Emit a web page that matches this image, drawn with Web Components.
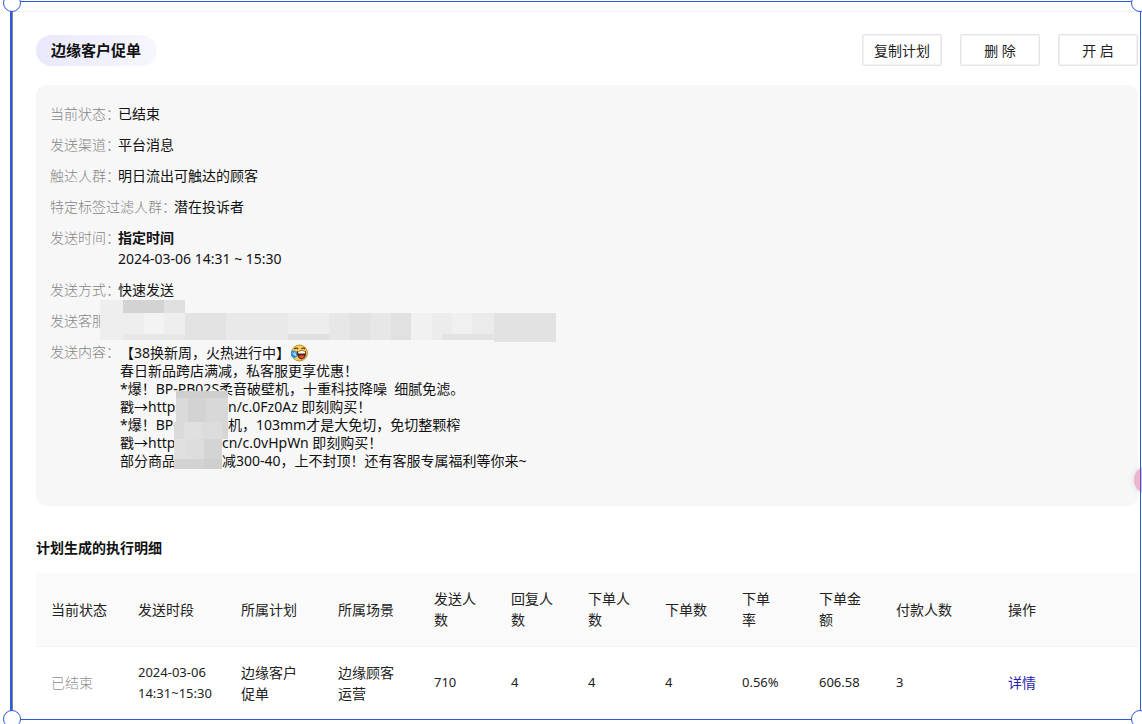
<!DOCTYPE html>
<html lang="zh-CN">
<head>
<meta charset="utf-8">
<title>边缘客户促单</title>
<style>
html,body{margin:0;background:#fff}
body{font-family:"Noto Sans","Noto Sans CJK SC",sans-serif;font-size:14px;line-height:21px;color:#1a1a1a}
</style>
</head>
<body>
<plan-page></plan-page>
<script>
const define=(name,html,setup)=>customElements.define(name,class extends HTMLElement{
  constructor(){super();this.attachShadow({mode:'open'}).innerHTML=html;}
  connectedCallback(){if(setup)setup(this,this.shadowRoot);}
});

define('plan-button',`<style>
:host{display:block}
button{width:80px;height:32px;padding:0;border:1px solid #e4e4e4;border-radius:2px;box-shadow:inset 0 0 0 1px #f3f3f3;background:#fff;font:inherit;color:#222;cursor:pointer}
</style><button type="button"><slot></slot></button>`);

define('plan-title',`<style>
:host{display:block}
h1{margin:0;padding:0 16px 0 15px;border-radius:16px;background:linear-gradient(100deg,#e8e8fb,#f7f7fe);font-size:15px;line-height:31px;font-weight:700;color:#111}
</style><h1><slot></slot></h1>`);

define('info-row',`<style>
:host{display:flex}
.label{color:#858585;font-weight:300;white-space:nowrap;margin-right:-2px}
.value{color:#111;min-width:0}
</style><span class="label"><slot name="label"></slot></span><div class="value"><slot></slot></div>`);

/* Grey pixel blocks laid over private details; each cell is "x,y,w,h,shade" */
define('pixel-mask',`<style>
:host{position:absolute;display:block;pointer-events:none}
svg{display:block}
</style><svg shape-rendering="crispEdges" aria-hidden="true"></svg>`,(el,root)=>{
  const svg=root.querySelector('svg');
  svg.setAttribute('width',el.getAttribute('w'));
  svg.setAttribute('height',el.getAttribute('h'));
  svg.innerHTML=el.getAttribute('cells').trim().split(/\s+/).map(c=>{
    const [x,y,w,h,f]=c.split(',');
    return `<rect x="${x}" y="${y}" width="${w}" height="${h}" fill="#${f}"/>`;}).join('');
});

define('laugh-emoji',`<style>
:host{display:block}
svg{display:block}
</style><svg width="18" height="18" viewBox="0 0 18 17" role="img" aria-label="笑哭">
<ellipse cx="9.500" cy="8.500" rx="8" ry="8" fill="#f9cf5a" stroke="#b07c22" stroke-width=".8"/>
<path d="M4.500 4.500Q6.500 2.500 8 4.500M11.500 4.500Q13 2.500 15 4.500" fill="none" stroke="#3d2508" stroke-width="1.200"/>
<path d="M6.500 7Q11 5.500 16 6.500Q17 13.500 11.500 15Q7 14 6.500 7Z" fill="#5a2410"/><path d="M8 7Q12 6 15.400 7L15 9H8.300Z" fill="#fff"/><path d="M8.500 12Q12 9.500 14.800 12Q12 15.500 8.500 12Z" fill="#e0503c"/>
<path d="M1 7Q4 4.500 7 8Q8 13 4.500 13.500Q0 13 1 7Z" fill="#2d8fe0"/><path d="M2.500 8.500L5 10.500M4.500 7.500L6 11.500" stroke="#c8eaff"/>
</svg>`);

define('message-body',`<style>
:host{display:block;position:relative;line-height:18px;white-space:nowrap;color:#111}
p{margin:0;display:flex;white-space:pre}
.head{flex:none;overflow:hidden}
.link{width:108px}.site{width:102px}
.mask{left:54px;top:47px}
</style>
<p>【38换新周，火热进行中】<laugh-emoji></laugh-emoji></p>
<p>春日新品跨店满减，私客服更享优惠！</p>
<p>*爆！BP-PB02S柔音破壁机，十重科技降噪  细腻免滤。</p>
<p><span class="head link">戳→https</span><span>n/c.0Fz0Az 即刻购买！</span></p>
<p><span class="head link">*爆！BP-</span><span>机，103mm才是大免切，免切整颗榨</span></p>
<p><span class="head site">戳→http</span><span>cn/c.0vHpWn 即刻购买！</span></p>
<p><span class="head site">部分商品</span><span>减300-40，上不封顶！还有客服专属福利等你来~</span></p>
<pixel-mask class="mask" w="54" h="78" cells="2,0,52,7,cfcfcf 2,7,12,24,dadada 14,7,18,24,d3d3d3 32,7,22,24,d8d8d8 0,31,10,17,dadada 10,31,18,17,e0e0e0 28,31,20,17,dcdcdc 48,31,6,17,d6d6d6 0,48,12,20,e0e0e0 12,48,18,20,dddddd 30,48,18,20,d4d4d4 0,68,30,10,d3d3d3 30,68,18,10,cfcfcf"></pixel-mask>`);

define('plan-info',`<style>
:host{display:flex;flex-direction:column;gap:10px;padding:18px 14px 36px;border-radius:10px;background:#f7f7f7}
.agents{position:relative}
.mask{left:50px;top:-10px}
.msg{margin:3px 0 0 2px}
strong{display:block;color:#111}
time{display:block}
</style>
<info-row><span slot="label">当前状态：</span>已结束</info-row>
<info-row><span slot="label">发送渠道：</span>平台消息</info-row>
<info-row><span slot="label">触达人群：</span>明日流出可触达的顾客</info-row>
<info-row><span slot="label">特定标签过滤人群：</span>潜在投诉者</info-row>
<info-row><span slot="label">发送时间：</span><strong>指定时间</strong><time>2024-03-06 14:31 ~ 15:30</time></info-row>
<info-row><span slot="label">发送方式：</span>快速发送</info-row>
<div class="agents"><info-row><span slot="label">发送客服</span></info-row>
<pixel-mask class="mask" w="456" h="42" cells="0,0,23,40,eeeeee 23,0,41,13,d3d3d3 64,0,21,13,e0e0e0 23,13,62,21,eeeeee 44,13,20,21,f3f3f3 85,13,41,27,e3e3e3 126,13,62,27,e9e9e9 188,13,41,27,ededed 229,13,21,27,e7e7e7 250,13,20,27,e2e2e2 270,13,21,27,e7e7e7 291,13,20,27,e1e1e1 311,13,21,27,f1f1f1 332,13,20,27,ececec 352,13,20,27,f0f0f0 372,13,22,27,ebebeb 394,13,62,29,e2e2e2 23,34,62,6,e7e7e7 188,34,41,6,e0e0e0 342,34,52,6,e3e3e3"></pixel-mask></div>
<info-row><span slot="label">发送内容：</span><message-body class="msg"></message-body></info-row>`);

define('run-table',`<style>
:host{display:block}
table{width:100%;table-layout:fixed;border-collapse:collapse}
th,td{box-sizing:border-box;padding:0 0 0 15px;text-align:left;font-weight:400;color:#222;border-bottom:1px solid #f2f2f2}
th{height:73px;background:#fafafa}
td{height:73px;border-bottom:0}
.num{font-size:13px}
.done{color:#8f8f8f;font-weight:300}
a{color:#2a1fae;text-decoration:none}
.c1{width:87px}.c2{width:103px}.c3{width:97px}.c4{width:96px}.c5{width:77px}.c6{width:112px}
</style>
<table><colgroup><col class="c1"><col class="c2"><col class="c3"><col class="c4"><col class="c5" span="6"><col class="c6"><col></colgroup>
<thead><tr><th>当前状态</th><th>发送时段</th><th>所属计划</th><th>所属场景</th><th>发送人<br>数</th><th>回复人<br>数</th><th>下单人<br>数</th><th>下单数</th><th>下单<br>率</th><th>下单金<br>额</th><th>付款人数</th><th>操作</th></tr></thead>
<tbody><tr><td class="done">已结束</td><td class="num">2024-03-06<br>14:31~15:30</td><td>边缘客户<br>促单</td><td>边缘顾客<br>运营</td><td class="num">710</td><td class="num">4</td><td class="num">4</td><td class="num">4</td><td class="num">0.56%</td><td class="num">606.58</td><td class="num">3</td><td><a href="#detail">详情</a></td></tr></tbody></table>`);

/* Blue selection outline with four round grips */
define('selection-frame',`<style>
:host{position:absolute;inset:1px 1px 4px 10px;border:1px solid #2c5bdc;border-left-width:2px;box-shadow:inset 1px 0 #858585;pointer-events:none}
i{position:absolute;box-sizing:border-box;width:18px;height:18px;border:1px solid #2c5bdc;border-radius:50%;background:#fff}
.t{top:-8px}.b{bottom:-9px}.l{left:-9px}.r{right:-9px}
</style><i class="t l"></i><i class="t r"></i><i class="b l"></i><i class="b r"></i>`);

define('plan-page',`<style>
:host{display:block;position:relative;box-sizing:border-box;min-height:100vh;overflow:hidden;padding:11px 4px 4px 13px}
main{border-top:1px solid #f1f1f1;padding:22px 0 0 23px}
header{display:flex;align-items:center;justify-content:space-between}
nav{display:flex;gap:18px}
plan-info{margin-top:19px}
h2{margin:31px 0 15px;font-size:14px;line-height:21px;font-weight:700;color:#111}
.float{position:absolute;right:-20px;top:466px;width:28px;height:28px;border-radius:50%;background:#efb3d3;box-shadow:0 0 6px #00000022}
</style>
<main>
<header><plan-title>边缘客户促单</plan-title><nav><plan-button>复制计划</plan-button><plan-button>删 除</plan-button><plan-button>开 启</plan-button></nav></header>
<plan-info></plan-info>
<h2>计划生成的执行明细</h2>
<run-table></run-table>
</main>
<div class="float"></div>
<selection-frame></selection-frame>`);
</script>
</body>
</html>
